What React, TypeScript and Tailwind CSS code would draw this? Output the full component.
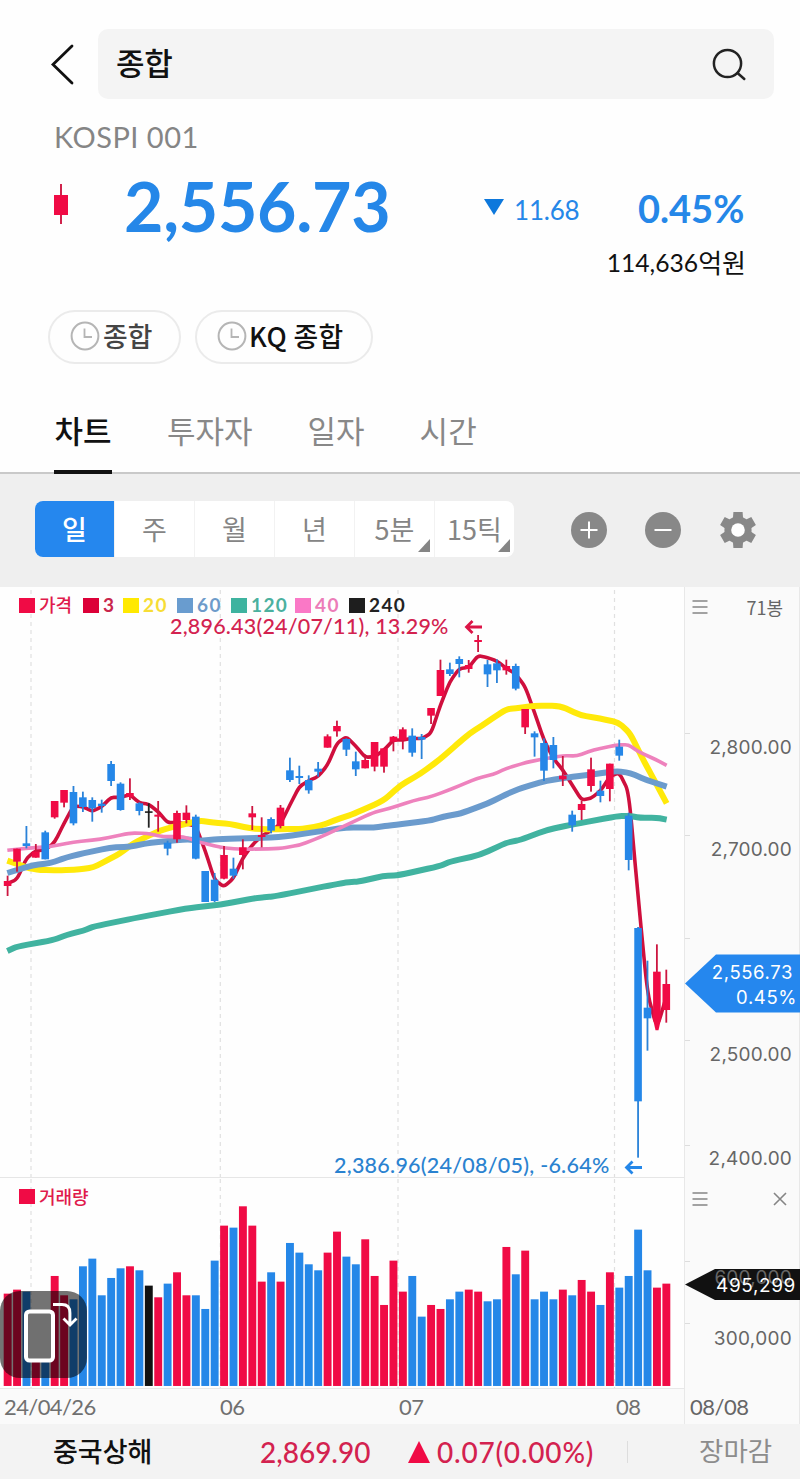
import React from "react";

type Candle = [string, number, number, number, number];

/* colour key, then high, body top, body bottom and low in thirds of a pixel */
const candles: Candle[] = [
  ["r", 857, 873, 888, 918], ["r", 776, 776, 815, 845], ["b", 708, 760, 768, 775], ["r", 762, 785, 803, 803],
  ["b", 722, 727, 808, 808], ["r", 633, 633, 682, 686], ["r", 600, 600, 638, 652], ["b", 588, 606, 700, 706],
  ["b", 605, 622, 651, 666], ["b", 622, 630, 655, 695], ["b", 629, 641, 648, 668], ["b", 513, 522, 573, 588],
  ["b", 577, 581, 660, 662], ["r", 565, 609, 621, 630], ["b", 637, 640, 663, 676], ["k", 640, 664, 668, 713],
  ["r", 633, 674, 680, 725], ["b", 752, 758, 776, 796], ["r", 662, 669, 748, 758], ["r", 646, 668, 690, 700],
  ["b", 674, 680, 806, 808], ["b", 843, 843, 936, 936], ["b", 849, 869, 933, 936], ["r", 768, 795, 866, 868],
  ["b", 803, 836, 857, 866], ["r", 748, 772, 795, 838], ["r", 648, 670, 682, 720], ["r", 682, 735, 741, 772],
  ["b", 682, 687, 722, 730], ["r", 645, 653, 708, 715], ["b", 503, 541, 570, 576], ["b", 527, 558, 564, 582],
  ["b", 556, 570, 601, 611], ["b", 516, 536, 545, 560], ["r", 433, 439, 473, 473], ["r", 392, 408, 424, 440],
  ["b", 445, 447, 479, 498], ["b", 485, 514, 538, 558], ["r", 493, 510, 535, 535], ["r", 456, 456, 530, 544],
  ["r", 475, 475, 530, 548], ["r", 438, 440, 455, 484], ["r", 412, 418, 450, 478], ["b", 415, 437, 488, 500],
  ["b", 432, 441, 449, 507], ["r", 354, 354, 377, 402], ["r", 209, 240, 318, 318], ["b", 218, 238, 252, 258],
  ["b", 199, 207, 222, 262], ["r", 210, 225, 237, 248], ["r", 135, 150, 156, 186], ["b", 210, 223, 253, 291],
  ["b", 208, 220, 241, 279], ["r", 209, 228, 241, 254], ["b", 221, 228, 296, 301], ["r", 357, 357, 412, 432],
  ["b", 424, 430, 442, 500], ["b", 445, 459, 542, 573], ["b", 441, 465, 510, 535], ["r", 498, 557, 568, 588],
  ["b", 662, 674, 706, 725], ["r", 632, 642, 660, 690], ["r", 503, 538, 588, 605], ["b", 572, 602, 618, 637],
  ["r", 521, 521, 597, 634], ["b", 449, 470, 497, 512], ["b", 668, 677, 810, 841], ["b", 1011, 1014, 1534, 1703],
  ["b", 1112, 1253, 1285, 1382], ["r", 1063, 1145, 1290, 1320], ["r", 1139, 1182, 1260, 1298],
];

const volumeTops = [
  340, 328, 334, 400, 400, 287, 345, 357, 258, 235, 345, 293, 264, 258, 270, 316, 351, 310, 276, 345, 345, 386, 241,
  136, 142, 78, 136, 304, 276, 304, 188, 217, 252, 270, 217, 154, 229, 252, 177, 287, 374, 241, 334, 287, 409, 374,
  386, 357, 334, 328, 334, 363, 357, 200, 282, 211, 357, 334, 357, 328, 345, 299, 334, 374, 276, 322, 287, 148, 270,
  322, 310,
];
const volumeColors = "rrbrbrrbbbbbbrbkrbrrbbbrbrrrbrbbbbrrbbrrrrrbbrrbbrrbbrbrbbbrbrrbrbbbbrr";

const ma3 = [
  880, 868, 805, 782, 780, 757, 700, 648, 650, 664, 650, 622, 622, 614, 638, 643, 665, 698, 698, 702, 708, 782, 870,
  890, 865, 804, 765, 738, 722, 702, 645, 590, 572, 560, 525, 460, 440, 468, 502, 500, 480, 450, 450, 445, 446, 430,
  345, 275, 236, 232, 197, 203, 213, 235, 252, 290, 368, 450, 505, 540, 585, 630, 625, 603, 560, 548, 605, 920, 1210,
  1315, 1220,
];

const ma20 =
  "22,812 51,822 90,835 120,840 180,841 240,838 280,832 320,812 360,790 400,760 440,740 480,722 540,705 600,692 640,698 690,702 750,715 800,718 900,717 960,708 1020,685 1060,672 1150,632 1200,587 1260,552 1320,508 1380,455 1410,430 1460,397 1520,357 1560,354 1600,347 1680,347 1740,375 1800,386 1855,397 1890,430 1930,510 1960,565 2000,640";
const ma40 =
  "22,781 75,775 150,770 220,756 300,748 390,729 440,730 490,740 550,740 600,757 660,772 720,778 840,776 900,765 960,742 1040,705 1120,667 1170,655 1240,632 1300,618 1380,587 1430,565 1480,553 1520,535 1580,517 1640,505 1690,497 1730,498 1780,480 1850,465 1885,464 1915,485 1970,510 2000,526";
const ma60 =
  "22,849 100,825 150,820 200,802 250,790 330,773 390,770 450,758 560,748 600,752 660,747 840,742 960,724 1040,712 1120,713 1170,706 1290,692 1330,680 1380,671 1465,640 1520,612 1570,592 1640,572 1720,560 1780,553 1850,543 1890,549 1940,570 2000,590";
const ma120 =
  "22,1083 50,1070 160,1050 200,1035 250,1022 280,1010 400,985 560,955 660,944 780,922 820,920 1035,877 1075,875 1150,858 1195,856 1320,828 1350,815 1440,795 1520,758 1560,750 1640,720 1720,703 1855,678 1890,678 1920,683 1970,683 2000,689";

const fills: Record<string, string> = { r: "#f00b45", b: "#2587e8", k: "#111111" };
const wicks: Record<string, string> = { r: "#cc1640", b: "#2a82d8", k: "#222222" };
const gridX = [31, 220.3, 398, 614.5];
const cx = (i: number) => 7.6 + 9.41 * i;

/* Rounds the corners of a polyline by running quadratic arcs through segment midpoints. */
function smooth(points: [number, number][]) {
  let d = `M${points[0][0]} ${points[0][1]}`;
  for (let i = 1; i < points.length - 1; i++) {
    const [x, y] = points[i];
    const [px, py] = points[i - 1];
    const [nx, ny] = points[i + 1];
    d += ` L${x + (px - x) * 0.3} ${y + (py - y) * 0.3} Q${x} ${y} ${x + (nx - x) * 0.3} ${y + (ny - y) * 0.3}`;
  }
  const last = points[points.length - 1];
  return `${d} L${last[0]} ${last[1]}`;
}

const toPath = (s: string) =>
  smooth(s.split(" ").map((p) => {
    const [x, y] = p.split(",").map(Number);
    return [x / 3, y / 3 + 3] as [number, number];
  }));

const LATO = "font-['Lato','Noto_Sans_CJK_KR',sans-serif]";
const AXIS = "font-['Inter','Noto_Sans_CJK_KR',sans-serif]";

function PriceChart() {
  return (
    <svg width="684" height="590" viewBox="0 0 684 590" className="block">
      {gridX.map((x) => (
        <line key={x} x1={x} x2={x} y1="3" y2="590" stroke="#e0e0e0" strokeWidth="1.2" strokeDasharray="4 4" />
      ))}
      <g fill="none" strokeLinejoin="round">
        <path d={smooth(ma3.map((y, i) => [cx(i), y / 3 + 3]))} stroke="#cf0f3d" strokeWidth="3.6" />
        <path d={toPath(ma20)} stroke="#ffe90a" strokeWidth="6" />
        <path d={toPath(ma60)} stroke="#6b9bcd" strokeWidth="6" />
        <path d={toPath(ma120)} stroke="#41b3a0" strokeWidth="6" />
        <path d={toPath(ma40)} stroke="#ee82bd" strokeWidth="3.6" />
      </g>
      {candles.map(([c, h, t, b, l], i) => (
        <g key={i}>
          <rect x={cx(i) - 0.9} y={h / 3 + 3} width="1.8" height={(l - h) / 3} fill={wicks[c]} />
          <rect x={cx(i) - 3.8} y={t / 3 + 3} width="7.6" height={Math.max((b - t) / 3, 1.5)} fill={fills[c]} />
        </g>
      ))}
      <path d="M653 432 L661 432 L658.5 443.3 H655.5 Z" fill="#f00b45" />
      <path d="M482 40H467M472.5 34L466.5 40L472.5 46" fill="none" stroke="#dc1547" strokeWidth="2.8" />
      <path d="M642 580.5H627M632.5 574.5L626.5 580.5L632.5 586.5" fill="none" stroke="#2587e8" strokeWidth="2.8" />
    </svg>
  );
}

function VolumeChart() {
  return (
    <svg width="684" height="210" viewBox="0 0 684 210" className="block">
      {gridX.map((x) => (
        <line key={x} x1={x} x2={x} y1="1" y2="210" stroke="#e0e0e0" strokeWidth="1.2" strokeDasharray="4 4" />
      ))}
      {volumeTops.map((t, i) => (
        <rect key={i} x={cx(i) - 3.9} y={t / 3 + 2.3} width="7.9" height={(617 - t) / 3} fill={fills[volumeColors[i]]} />
      ))}
    </svg>
  );
}

function Clock() {
  return (
    <svg width="30" height="30" viewBox="0 0 30 30" fill="none" stroke="#b5b5b5" className="-mt-[2px]">
      <circle cx="15" cy="15" r="13.4" strokeWidth="2" />
      <path d="M14.5 7.5V16H22" strokeWidth="1.8" />
    </svg>
  );
}

function Menu() {
  return (
    <svg width="16" height="14" viewBox="0 0 16 14" stroke="#858585" strokeWidth="1.7">
      <path d="M.5 1H15.5M.5 7H15.5M.5 13H15.5" />
    </svg>
  );
}

const periods = ["일", "주", "월", "년", "5분", "15틱"];
const legend = [
  { mark: "bg-[#f00b45]", text: "text-[#e01a4c]", label: "가격", w: "w-[64px]" },
  { mark: "bg-[#dc0038]", text: "text-[#c9264c]", label: "3", w: "w-[40px]" },
  { mark: "bg-[#ffe900]", text: "text-[#f7dd35]", label: "20", w: "w-[54px]" },
  { mark: "bg-[#699ccf]", text: "text-[#6d9bca]", label: "60", w: "w-[54px]" },
  { mark: "bg-[#3eb39f]", text: "text-[#4bb09e]", label: "120", w: "w-[64px]" },
  { mark: "bg-[#fa78c6]", text: "text-[#ec7cb8]", label: "40", w: "w-[54px]" },
  { mark: "bg-[#1e1e1e]", text: "text-[#222222]", label: "240", w: "w-[70px]" },
];
const ticks = [
  { gap: "pt-[146px]" }, { gap: "pt-[101px]" }, { gap: "pt-[102px]" }, { gap: "pt-[101px]" }, { gap: "pt-[104px]" },
];

export default function App() {
  return (
    <div className="flex h-[1479px] w-[800px] flex-col overflow-hidden bg-[#fefefe] font-['Noto_Sans_CJK_KR',sans-serif] text-[#111] whitespace-nowrap">
      <header className="flex h-[99px] items-end pl-[50px]">
        <svg width="26" height="70" viewBox="0 0 26 70" fill="none" stroke="#111" strokeWidth="2.8" strokeLinecap="round">
          <path d="M22 17L3 35.5L22 54" />
        </svg>
        <div className="ml-[22px] flex h-[70px] w-[676px] items-center justify-between rounded-[10px] bg-[#f4f4f4] pr-[27px] pl-[18px]">
          <span className="pb-[6px] text-[31px] leading-none font-medium tracking-[-0.3px]">종합</span>
          <svg width="36" height="36" viewBox="0 0 36 36" fill="none" stroke="#222" strokeWidth="2.5" strokeLinecap="round">
            <circle cx="16.5" cy="17.5" r="13.6" />
            <path d="M26.5 27L33.3 33" />
          </svg>
        </div>
      </header>

      <div className={`flex h-[74px] items-center pl-[54px] text-[29px] leading-none tracking-[0.5px] text-[#858585] ${LATO}`}>KOSPI 001</div>

      <section className={`flex h-[68px] items-center pl-[53px] leading-none text-[#2587e8] ${LATO}`}>
        <svg width="16" height="40" viewBox="0 0 16 40" className="mb-[6px]">
          <path d="M8 0V40" stroke="#d0234c" strokeWidth="2" />
          <rect x="1" y="11" width="14" height="20" fill="#f00b45" />
        </svg>
        <span className="ml-[55px] w-[267px] pb-[3px] text-[68px] font-bold tracking-[-0.3px]">2,556.73</span>
        <svg width="20" height="16" viewBox="0 0 20 16" className="ml-[93px]">
          <path d="M0 0H20L10 16Z" fill="#0d78dc" />
        </svg>
        <span className="ml-[10px] w-[68px] pt-[5px] text-[26px] tracking-[-0.2px]">11.68</span>
        <span className="ml-[56px] pt-[2px] text-[38px] font-bold">0.45%</span>
      </section>
      <div className={`flex h-[44px] items-center justify-end pt-[1px] pr-[54px] text-[24.7px] leading-none ${LATO}`}>
        <span>114,636</span><span className="pb-[2px] text-[26px]">억원</span>
      </div>

      <div className="mt-[25px] flex h-[54px] gap-[14px] pl-[48px]">
        <div className="flex w-[133px] items-center rounded-full border-2 border-[#ebebeb] pl-[20px] text-[26.8px] leading-none font-medium text-[#444]">
          <Clock /><span className="ml-[3px] pb-px">종합</span>
        </div>
        <div className="flex w-[178px] items-center rounded-full border-2 border-[#ebebeb] pl-[20px] text-[26.8px] leading-none font-medium text-[#111]">
          <Clock /><span className="ml-[2px] pb-px tracking-[0.4px]">KQ 종합</span>
        </div>
      </div>

      <nav className="flex h-[110px] items-end gap-[55px] border-b-2 border-[#c9c9c9] pl-[54px] text-[31px] leading-none text-[#888]">
        <span className="-mb-[2px] flex h-[63px] w-[58px] justify-center border-b-[4px] border-[#111] pt-[3px] font-medium text-[#111]">차트</span>
        <span className="h-[58px]">투자자</span>
        <span className="h-[58px]">일자</span>
        <span className="h-[58px]">시간</span>
      </nav>

      <div className="flex h-[113px] items-center bg-[#efefef] pl-[35px]">
        <div className="-mt-[4px] flex h-[56px] w-[479px] overflow-hidden rounded-[8px] bg-white text-[27px] leading-none text-[#858585]">
          {periods.map((p, i) => (
            <div
              key={p}
              className={`relative flex flex-1 items-center justify-center pb-[1px] ${i === 0 ? "bg-[#2587ee] font-medium text-white" : "border-l border-[#f2f2f2]"}`}
            >
              {p}
              {i > 3 && (
                <svg width="12" height="13" viewBox="0 0 12 13" className="absolute right-[4px] bottom-[5px]">
                  <path d="M12 0V13H0Z" fill="#858585" />
                </svg>
              )}
            </div>
          ))}
        </div>
        <svg width="36" height="36" viewBox="0 0 36 36" className="-mt-[1px] ml-[57px]">
          <circle cx="18" cy="18" r="18" fill="#888" />
          <path d="M9.5 18H26.5M18 9.5V26.5" stroke="#fff" strokeWidth="2" />
        </svg>
        <svg width="36" height="36" viewBox="0 0 36 36" className="-mt-[1px] ml-[38px]">
          <circle cx="18" cy="18" r="18" fill="#888" />
          <path d="M9.5 18H26.5" stroke="#fff" strokeWidth="2" />
        </svg>
        <svg width="36" height="36" viewBox="0 0 36 36" className="-mt-[1px] ml-[39px]">
          <g fill="#888">
            <circle cx="18" cy="18" r="13.6" />
            <path d="M13.4 0H22.6L23.2 8H12.8ZM12.8 28H23.2L22.6 36H13.4Z" />
            <path d="M13.4 0H22.6L23.2 8H12.8ZM12.8 28H23.2L22.6 36H13.4Z" transform="rotate(60 18 18)" />
            <path d="M13.4 0H22.6L23.2 8H12.8ZM12.8 28H23.2L22.6 36H13.4Z" transform="rotate(120 18 18)" />
          </g>
          <circle cx="18" cy="18" r="6.8" fill="#fff" />
        </svg>
      </div>

      <main className="flex h-[837px]">
        <div className="flex w-[684px] flex-col">
          <div className="relative h-[590px]">
            <PriceChart />
            <div className={`absolute top-[8px] left-[19px] flex h-[20px] items-center text-[19px] leading-none font-bold ${LATO}`}>
              {legend.map((l) => (
                <div key={l.label} className={`flex items-center ${l.w} ${l.text}`}>
                  <i className={`mr-[4px] block h-[15px] w-[16px] ${l.mark}`} />
                  <span className={l.label === "가격" ? "pb-[1px] text-[18px] font-medium" : "pb-px tracking-[1.4px]"}>{l.label}</span>
                </div>
              ))}
            </div>
            <div className={`absolute top-[28px] left-[170px] text-[21.5px] leading-[22px] font-medium tracking-[0.2px] text-[#d3224f] ${LATO}`}>2,896.43(24/07/11), 13.29%</div>
            <div className={`absolute top-[567px] left-[334px] text-[21.5px] leading-[22px] font-medium tracking-[0.25px] text-[#2a82d0] ${LATO}`}>2,386.96(24/08/05), -6.64%</div>
          </div>
          <div className="relative h-[211px] border-t border-[#e6e6e6]">
            <VolumeChart />
            <div className="absolute top-[9px] left-[19px] flex items-center text-[18px] leading-none font-medium text-[#e01a4c]">
              <i className="mr-[4px] block h-[15px] w-[16px] bg-[#f00b45]" />거래량
            </div>
            <div className="absolute top-[113px] left-0 h-[87px] w-[87px] rounded-[20px] bg-black/55">
              <svg width="87" height="87" viewBox="0 0 87 87" fill="none" stroke="#fff">
                <rect x="26" y="20.5" width="27" height="49" rx="3.5" fill="#707070" strokeWidth="4" />
                <path d="M53 13.5H62C68 13.5 70 17 70 22V33M63.5 27.5L70 34L76.5 27.5" strokeWidth="2.8" />
              </svg>
            </div>
          </div>
          <div className={`flex h-[36px] items-center border-t border-[#e8e8e8] bg-[#fafafa] text-[22px] leading-none tracking-[-0.6px] text-[#707070] ${LATO}`}>
            <span className="w-[216px] pl-[4px]">24/04/26</span>
            <span className="w-[179px] pl-[4px]">06</span>
            <span className="w-[217px] pl-[4px]">07</span>
            <span className="pl-[4px]">08</span>
          </div>
        </div>

        <aside className={`relative flex w-[116px] flex-col border-x border-[#e8e8e8] bg-[#fafafa] leading-none text-[#666] ${AXIS}`}>
          <div className="absolute top-0 left-0">
            {ticks.map((t, i) => (
              <div key={i} className={t.gap}><i className="block h-px w-[5px] bg-[#ddd]" /></div>
            ))}
            <div className="pt-[115px]"><i className="block h-px w-[5px] bg-[#ddd]" /></div>
            <div className="pt-[61px]"><i className="block h-px w-[5px] bg-[#ddd]" /></div>
          </div>
          <div className="flex h-[40px] items-center justify-between pr-[16px] pl-[7px] text-[18px]">
            <Menu /><span className="font-['Noto_Sans_CJK_KR',sans-serif]">71봉</span>
          </div>
          <div className="flex h-[549px] flex-col items-end pt-[111px] pr-[7px] text-[19px] tracking-[0.2px]">
            <span className="h-[102px]">2,800.00</span>
            <span className="h-[205px]">2,700.00</span>
            <span className="h-[104px]">2,500.00</span>
            <span>2,400.00</span>
          </div>
          <div className="flex h-[46px] items-center justify-between pr-[12px] pl-[7px]">
            <Menu />
            <svg width="14" height="14" viewBox="0 0 14 14" stroke="#858585" strokeWidth="1.6"><path d="M1 1L13 13M13 1L1 13" /></svg>
          </div>
          <div className="flex flex-1 flex-col items-end pt-[107px] pr-[7px] text-[19px] tracking-[0.3px]">
            <span>300,000</span>
          </div>
          <div className={`flex h-[36px] items-center pt-[2px] pl-[5px] text-[22px] tracking-[-0.5px] ${LATO}`}>08/08</div>

          <div className="absolute top-[367px] left-0 h-[59px] w-[115px]">
            <svg width="115" height="59" viewBox="0 0 115 59" className="absolute inset-0"><path d="M0 29.5L31 .5H115V58.5H31Z" fill="#2587ee" /></svg>
            <div className="relative flex flex-col items-end pr-[7px] text-[18.5px] tracking-[0.6px] text-white">
              <span className="h-[25px] pt-[9px]">2,556.73</span>
              <span className="-mr-[4px] pt-[9px]">0.45%</span>
            </div>
          </div>
          <div className="absolute top-[682px] left-0 h-[31px] w-[115px]">
            <svg width="115" height="31" viewBox="0 0 115 31" className="absolute inset-0"><path d="M0 15.5L30 0H115V31H30Z" fill="#111" /></svg>
            <div className="absolute -top-[1px] right-[8px] text-[19px] tracking-[0.2px] text-[#666]">600,000</div>
            <div className="absolute top-[7px] right-[4px] text-[19px] tracking-[0.6px] text-white">495,299</div>
          </div>
        </aside>
      </main>

      <footer className={`flex h-[55px] items-center bg-[#f3f3f3] leading-none ${LATO}`}>
        <span className="ml-[53px] w-[207px] text-[27px] font-medium">중국상해</span>
        <span className="w-[148px] text-[28px] font-medium text-[#d3224f]">2,869.90</span>
        <svg width="22" height="22" viewBox="0 0 22 22"><path d="M11 0L22 22H0Z" fill="#f00b45" /></svg>
        <span className="ml-[7px] w-[190px] text-[28px] font-medium tracking-[0.8px] text-[#d3224f]">0.07(0.00%)</span>
        <i className="block h-[22px] w-px bg-[#ddd]" />
        <span className="ml-[71px] text-[26.5px] text-[#8c8c8c]">장마감</span>
      </footer>
    </div>
  );
}
